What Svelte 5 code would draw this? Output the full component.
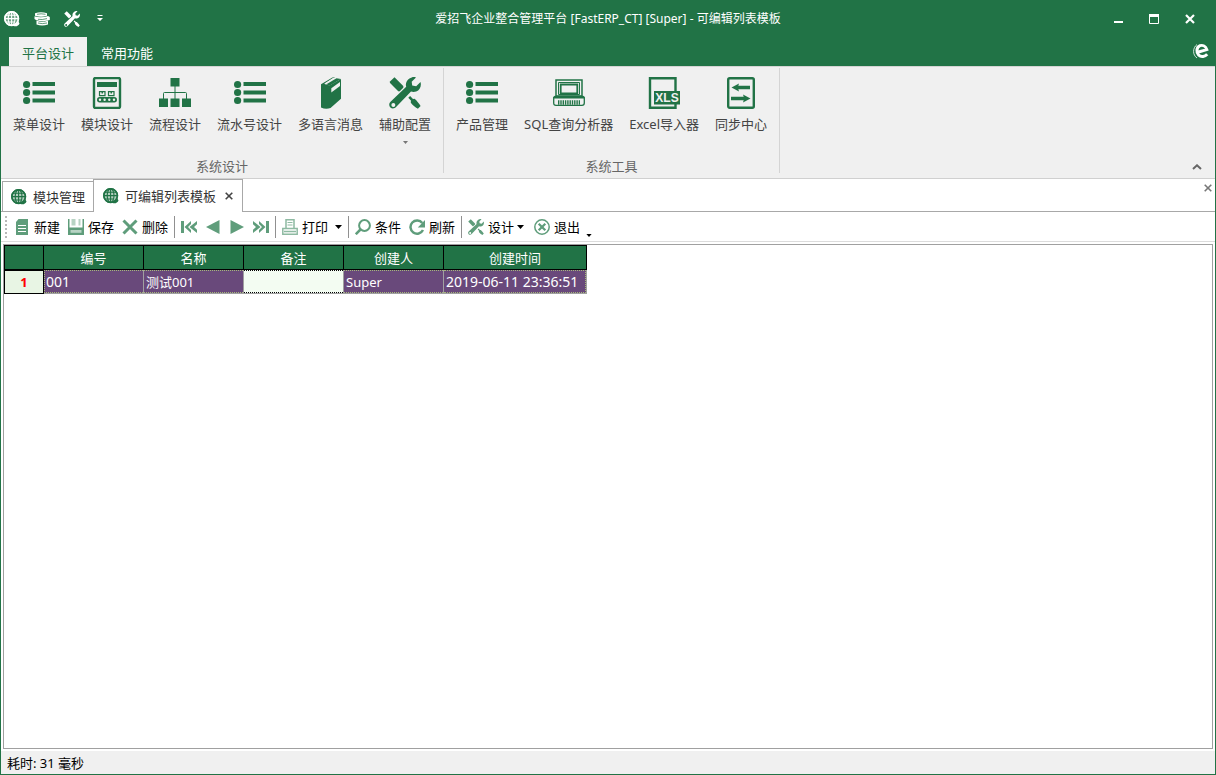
<script>
  const groups = [
    {
      title: '系统设计',
      items: [
        { icon: 'list', label: '菜单设计' },
        { icon: 'module', label: '模块设计' },
        { icon: 'flow', label: '流程设计' },
        { icon: 'list', label: '流水号设计' },
        { icon: 'book', label: '多语言消息' },
        { icon: 'tools', label: '辅助配置', menu: true },
      ],
    },
    {
      title: '系统工具',
      items: [
        { icon: 'list', label: '产品管理' },
        { icon: 'laptop', label: 'SQL查询分析器' },
        { icon: 'xls', label: 'Excel导入器' },
        { icon: 'sync', label: '同步中心' },
      ],
    },
  ];

  const toolbar = [
    [
      { icon: 'new', label: '新建' },
      { icon: 'save', label: '保存' },
      { icon: 'delete', label: '删除' },
    ],
    [
      { icon: 'first', hint: '首条' },
      { icon: 'prev', hint: '上一条' },
      { icon: 'next', hint: '下一条' },
      { icon: 'last', hint: '末条' },
    ],
    [{ icon: 'print', label: '打印', menu: 'wide' }],
    [
      { icon: 'search', label: '条件' },
      { icon: 'refresh', label: '刷新' },
    ],
    [
      { icon: 'tools', label: '设计', menu: 'tight' },
      { icon: 'exit', label: '退出' },
    ],
  ];

  const columns = ['编号', '名称', '备注', '创建人', '创建时间'];
  let remark = $state('');
</script>

{#snippet globe()}
  <svg class="s16" viewBox="0 0 16 16" fill="none" stroke="currentColor" aria-hidden="true">
    <circle cx="7.6" cy="7.6" r="7.2" fill="currentColor" fill-opacity=".35" stroke-width=".8" />
    <circle cx="7.6" cy="7.6" r="6.7" stroke-width="1.600" />
    <ellipse cx="7.6" cy="7.6" rx="3.4" ry="6.9" stroke-width="1.1" />
    <path d="M7.6 .8V14.4M.8 7.6H14.4M1.9 4.2H13.3M1.9 11H10" stroke-width="1.1" />
    <path d="M9.6 12.9c2 .8 4.300-.5 4.600-3l1.300 2.600c-.9 2.500-3.800 3.500-5.900 2.400z" fill="currentColor" stroke="none" />
  </svg>
{/snippet}

{#snippet tools(cls)}
  <svg class={cls} viewBox="0 0 32 32" fill="currentColor" aria-hidden="true">
    <path d="M1 4.500 5.500.3 14 8.800c.6.8.5 1.500 0 2.200L11 14c-.7.6-1.400.6-2 0L.8 5.700z" />
    <path d="M22.800.4c1.400-.5 2.800-.4 4.200.1L22.700 4.800l.5 3.700 4 .8L31.500 5c1.200 4.200-.6 8.300-4.300 9.600-2 .7-3.700.5-5.200 0L7.300 29.800c-1.700 2-4.300 2.200-5.900.6-1.700-1.700-1.500-4.200.4-5.800L17.200 9.800c-1.300-4 1.500-8.300 5.600-9.400zM4.300 26a2 2 0 1 0 .1 4 2 2 0 0 0-.1-4z" fill-rule="evenodd" />
    <path d="m19.300 20.800 1.800-1.800 2.900 2.900 1.600-.1c2.300 2 4.400 4.600 6 7.300l-2.700 2.700c-2.900-1.600-5.300-3.500-7.100-6l.1-2.200z" />
  </svg>
{/snippet}

{#snippet bigIcon(name)}
  {#if name === 'tools'}
    {@render tools('s32')}
  {:else}
    <svg class="s32" viewBox="0 0 32 32" fill="currentColor" aria-hidden="true">
      {#if name === 'list'}
        <circle cx="3.600" cy="7.500" r="3.600" /><circle cx="3.600" cy="15.500" r="3.600" /><circle cx="3.600" cy="23.500" r="3.600" />
        <path d="M9.500 5H32v4H9.500zM9.500 13.500H32v4H9.500zM9.500 21.500H32v4H9.500z" />
      {:else if name === 'module'}
        <rect x="3" y="1" width="26" height="30" rx="1.500" fill="none" stroke="currentColor" stroke-width="2.400" />
        <path d="M6 5h20v5H6z" />
        <path d="M8.500 14.700h5.500v4H8.500zM17.500 14.700h5.500v4h-5.500z" fill="none" stroke="currentColor" stroke-width="1.200" />
        <path d="M10.500 14.500h1.500v2h-1.500zM19.500 14.500h1.500v2h-1.500z" />
        <rect x="6" y="20" width="20" height="5.500" rx="2.700" />
        <g fill="#f0f0f0"><circle cx="9" cy="22.700" r="1.200" /><circle cx="13.600" cy="22.700" r="1.200" /><circle cx="18.300" cy="22.700" r="1.200" /><circle cx="23" cy="22.700" r="1.200" /></g>
      {:else if name === 'flow'}
        <path d="M11.500 1h9v8.500h-9zM0 21.500h9V30H0zM11.500 21.500h9V30h-9zM23 21.500h9V30h-9z" />
        <path d="M16 9v13M4.500 22v-5.500c0-.7.300-1 1-1h21c.7 0 1 .3 1 1V22" fill="none" stroke="currentColor" />
      {:else if name === 'book'}
        <path d="M6 7.300 17 .8c1-.6 2-.9 3.200-.8L9.500 6.800l5 1.800L26 2v19.700L15.500 31c-3 1.200-6.500 1-9.500-.5z" />
        <path d="m16.300 11.300 8.700-6.300v4l-8.700 6.600z" fill="#f0f0f0" />
        <path d="M9.800 6.900 19.500.8" fill="none" stroke="#f0f0f0" stroke-width="1.200" />
        <path d="M11.500 7.200 21.500 1.300l4.500.700-11.500 6.800z" />
      {:else if name === 'laptop'}
        <path d="M3 3h26v16H3z" fill="none" stroke="currentColor" stroke-width="1.500" />
        <path d="M5.500 5.500h21v12h-21z" fill="none" stroke="currentColor" stroke-width="1" />
        <path d="M7.700 7.500h16.600v9H7.700z" fill="none" stroke="currentColor" stroke-width="1.800" />
        <path d="M2 19.500h28l1.300.8v5.700c0 1.600-.7 2.300-2.300 2.300H3c-1.600 0-2.300-.7-2.300-2.300v-5.700z" fill="none" stroke="currentColor" stroke-width="1.300" />
        <path d="M1 20.500h30" stroke="currentColor" stroke-width="2" />
        <path d="M5 25.500h22" stroke="currentColor" stroke-width="4.500" stroke-dasharray="1.400 .9" />
      {:else if name === 'xls'}
        <path d="M2 1.300h25.500v29.500H2z" fill="none" stroke="currentColor" stroke-width="2.400" />
        <path d="M6 14h26v13.500H6z" />
        <text x="19" y="25" class="xls">XLS</text>
      {:else if name === 'sync'}
        <rect x="3.200" y="1.200" width="25.600" height="29.600" rx="1.500" fill="none" stroke="currentColor" stroke-width="2.400" />
        <path d="M6.500 10.500 14 6.500l-.7 2.200H25v3.600H13.300l.7 2.200zM25.500 21.500 18 17.500l.7 2.200H6v3.600h12.700l-.7 2.200z" />
      {/if}
    </svg>
  {/if}
{/snippet}

{#snippet smallIcon(name)}
  {#if name === 'tools'}
    {@render tools('s16')}
  {:else}
    <svg class="s16" viewBox="0 0 16 16" fill="currentColor" aria-hidden="true">
      {#if name === 'new'}
        <path d="M4.500 0H14v16H2V3z" />
        <path d="M4 6.500h8M4 9.500h8M4 12.500h8" stroke="#fff" stroke-width="1" />
      {:else if name === 'save'}
        <path d="M0 0h1.500v8.500h13V0H16v16H0z" />
        <path d="M3.500 0h4v6.500h-4zM10.500 0h2v6.500h-2z" opacity=".45" />
        <path d="M2.500 11h11v2.800h-11z" fill="#fff" opacity=".55" />
      {:else if name === 'delete'}
        <path d="M1.500 1.500 14.500 14.500M14.500 1.500 1.500 14.500" stroke="currentColor" stroke-width="3" />
      {:else if name === 'first'}
        <path d="M0 2h3v12H0zM10 2v3L7 8l3 3v3L3.500 8zM16 2v3.200L13 8l3 2.800V14L8.500 8z" />
      {:else if name === 'prev'}
        <path d="M14.500 1v14L1 8z" />
      {:else if name === 'next'}
        <path d="M1.500 1v14L15 8z" />
      {:else if name === 'last'}
        <path d="M13 2h3v12h-3zM6 2v3l3 3-3 3v3l6.500-6zM0 2v3.200L3 8l-3 2.800V14l7.500-6z" />
      {:else if name === 'print'}
        <g fill="none" stroke="currentColor" stroke-width="1.500" opacity=".7">
          <path d="M4 9V.8h8V9M.8 9.500h14.400v5.700H.8zM2 12.500h12" /><path d="M5.500 3.500h5M5.500 6h5" stroke-width="1" />
        </g>
      {:else if name === 'search'}
        <circle cx="9.500" cy="6.500" r="5.400" fill="none" stroke="currentColor" stroke-width="2" />
        <path d="m5.500 10.500-4.700 4.700" stroke="currentColor" stroke-width="2.500" />
      {:else if name === 'refresh'}
        <path d="M13.300 4A6.600 6.600 0 1 0 14 11" fill="none" stroke="currentColor" stroke-width="2.500" />
        <path d="M16 1v7.500H8.800z" />
      {:else if name === 'exit'}
        <circle cx="8" cy="8" r="7.200" fill="none" stroke="currentColor" stroke-width="1.500" />
        <path d="m4.700 4.700 6.600 6.600M11.300 4.700l-6.600 6.600" stroke="currentColor" stroke-width="2.200" />
      {/if}
    </svg>
  {/if}
{/snippet}

{#snippet caret()}
  <svg class="caret" viewBox="0 0 7 4" aria-hidden="true"><path d="M0 0h7L3.500 4z" fill="currentColor" /></svg>
{/snippet}

<div class="window">
  <header class="titlebar">
    <div class="quick">
      <button aria-label="主页">{@render globe()}</button>
      <button aria-label="数据">
        <svg class="s16" viewBox="0 0 16 16" fill="currentColor" aria-hidden="true">
          <path d="M1 2.300Q7 .2 13 2.300v2.500Q7 6.500 1 4.800z" />
          <path d="M.5 5.300Q7 7.500 14 5l1.800.9v3.200Q9 11.300 2 9L.5 8z" />
          <path d="M2.500 9.500Q8 12 14 9.500v3.900Q8 15.500 2.500 13.400z" />
          <path d="M3 3.300Q7 2.300 11.500 3.300M4 8.300q4 .8 9-.7M4 12q4 1.300 9 0" fill="none" stroke="#217346" stroke-width=".7" />
        </svg>
      </button>
      <button aria-label="工具">{@render tools('s16')}</button>
      <button aria-label="自定义快速访问工具栏">
        <svg class="more" viewBox="0 0 6 7" fill="currentColor" aria-hidden="true"><path d="M.5 0h5v1h-5zM0 3h6L3 6z" /></svg>
      </button>
    </div>
    <h1>爱招飞企业整合管理平台 [FastERP_CT] [Super] - 可编辑列表模板</h1>
    <div class="controls">
      <button aria-label="最小化"><svg viewBox="0 0 12 12"><path d="M2 8h9v2H2z" fill="currentColor" /></svg></button>
      <button aria-label="最大化"><svg viewBox="0 0 12 12"><path d="M1.500 2v8.500h9V2" fill="none" stroke="currentColor" /><path d="M1 1h10v3H1z" fill="currentColor" /></svg></button>
      <button aria-label="关闭"><svg viewBox="0 0 12 12"><path d="m2 2 8 8M10 2l-8 8" stroke="currentColor" stroke-width="2.200" /></svg></button>
    </div>
  </header>

  <nav class="ribbon-tabs">
    <button class="active">平台设计</button>
    <button>常用功能</button>
    <svg class="brand s16" viewBox="0 0 16 16" fill="none" stroke="currentColor" aria-hidden="true">
      <path d="M5.500 9 13.800 6.600C12.700 3.300 9.700 1.800 7 2.700 3.300 4.200 3 9.500 5.700 12.200c2.500 2.200 6.300 1.500 8.500-1" stroke-width="3" />
      <path d="M4 1.500C-.6 5-.5 12 4 15" stroke-width="1" opacity=".8" />
    </svg>
  </nav>

  <section class="ribbon">
    {#each groups as group}
      <div class="group">
        <div class="items">
          {#each group.items as item}
            <button>
              {@render bigIcon(item.icon)}
              <span>{item.label}</span>
              {#if item.menu}{@render caret()}{/if}
            </button>
          {/each}
        </div>
        <div class="group-title">{group.title}</div>
      </div>
    {/each}
    <button class="collapse" aria-label="折叠功能区">
      <svg viewBox="0 0 10 6" aria-hidden="true"><path d="m1 5 4-3.700L9 5" fill="none" stroke="currentColor" stroke-width="2" /></svg>
    </button>
  </section>

  <nav class="doc-tabs">
    <button class="doc">{@render globe()}<span>模块管理</span></button>
    <div class="doc current">
      {@render globe()}<span>可编辑列表模板</span>
      <button class="close" aria-label="关闭标签"><svg viewBox="0 0 8 8"><path d="m.7.700 6.600 6.600M7.300.700.7 7.300" stroke="currentColor" stroke-width="1.600" /></svg></button>
    </div>
    <button class="close close-all" aria-label="关闭页面"><svg viewBox="0 0 8 8"><path d="m.7.700 6.600 6.600M7.300.700.7 7.300" stroke="currentColor" stroke-width="1.600" /></svg></button>
  </nav>

  <div class="toolbar">
    <span class="grip"></span>
    {#each toolbar as part, i}
      {#if i > 0}<span class="sep"></span>{/if}
      {#each part as tool}
        <button class={tool.menu} aria-label={tool.label ?? tool.hint}>
          {@render smallIcon(tool.icon)}
          {#if tool.label}<span>{tool.label}</span>{/if}
          {#if tool.menu}{@render caret()}{/if}
        </button>
      {/each}
    {/each}
    <button class="overflow" aria-label="更多">{@render caret()}</button>
  </div>

  <main class="grid">
    <table>
      <colgroup>
        <col class="c-index" /><col class="c-text" /><col class="c-text" /><col class="c-text" /><col class="c-text" /><col class="c-time" />
      </colgroup>
      <thead>
        <tr><th aria-label="行号"></th>{#each columns as column}<th>{column}</th>{/each}</tr>
      </thead>
      <tbody>
        <tr>
          <th>1</th>
          <td><div class="cell start num">001</div></td>
          <td><div class="cell">测试001</div></td>
          <td class="editing"><input class="cell" aria-label="备注" bind:value={remark} /></td>
          <td><div class="cell">Super</div></td>
          <td><div class="cell end num">2019-06-11 23:36:51</div></td>
        </tr>
      </tbody>
    </table>
  </main>

  <footer>耗时: 31 毫秒</footer>
</div>

<style>
  :global(body) { margin: 0; }

  .window {
    --green: #217346;
    --soft: #5f9d7b;
    box-sizing: border-box;
    min-height: 100vh;
    display: flex;
    flex-direction: column;
    background: #fff;
    border: 1px solid var(--green);
    border-top: 0;
    color: #000;
    font: 13px/18px "Noto Sans", "Noto Sans CJK SC", sans-serif;
    white-space: nowrap;
  }

  button {
    margin: 0;
    padding: 0;
    border: 0;
    background: none;
    color: inherit;
    font: inherit;
  }
  svg { display: block; flex: none; }
  .s16 { width: 16px; height: 16px; }
  .s32 { width: 32px; height: 32px; }
  .caret { width: 7px; height: 4px; }

  .titlebar {
    display: grid;
    grid-template-columns: 1fr auto 1fr;
    align-items: center;
    height: 37px;
    background: var(--green);
    color: #fff;
  }
  .quick { display: flex; align-items: center; gap: 14px; padding-left: 3px; }
  .quick .more { width: 6px; height: 7px; margin-left: 3px; }
  h1 { margin: 0; font-size: 12px; font-weight: 400; line-height: 18px; }
  .controls { display: flex; justify-content: flex-end; gap: 24px; padding-right: 19px; }
  .controls svg { width: 12px; height: 12px; }

  .ribbon-tabs {
    display: flex;
    gap: 1px;
    height: 29px;
    padding: 0 6px 0 8px;
    background: var(--green);
    color: #fff;
  }
  .ribbon-tabs button { padding: 3px 13px 0; }
  .ribbon-tabs .active { background: #f1f1f1; color: var(--green); }
  .brand { margin: 6px 0 0 auto; }

  .ribbon {
    display: flex;
    height: 111px;
    background: #f0f0f0;
    border-top: 1px solid #d4d4d4;
    border-bottom: 1px solid #d0d0d0;
    color: #444;
  }
  .group {
    display: flex;
    flex-direction: column;
    justify-content: space-between;
    margin: 1px 0 5px;
    padding: 0 4px;
    border-right: 1px solid #d4d4d4;
  }
  .items { display: flex; align-items: flex-start; }
  .items button {
    display: flex;
    flex-direction: column;
    align-items: center;
    padding: 9px 8px 0;
  }
  .items .s32 { color: var(--green); }
  .items span { margin-top: 6px; }
  .items .caret { margin-top: 8px; width: 5px; height: 3px; color: #777; }
  .xls { font: bold 12px "Liberation Sans", sans-serif; fill: #f0f0f0; text-anchor: middle; }
  .group-title { text-align: center; color: #666; margin-bottom: -2px; }
  .collapse { align-self: flex-end; margin: 0 13px 8px auto; color: #666; }
  .collapse svg { width: 10px; height: 6px; }

  .doc-tabs {
    display: flex;
    align-items: flex-end;
    height: 32px;
    padding-left: 1px;
    border-bottom: 1px solid #a8a8a8;
    color: #333;
  }
  .doc {
    display: flex;
    align-items: center;
    gap: 6px;
    box-sizing: border-box;
    height: 30px;
    padding: 0 8px;
    border: 1px solid #a8a8a8;
    border-width: 1px 0 0 1px;
  }
  .doc .s16 { color: var(--green); }
  .current {
    height: 33px;
    margin-bottom: -1px;
    padding: 0 9px;
    border-right-width: 1px;
    background: #fff;
  }
  .close svg { width: 8px; height: 8px; }
  .current .close { margin-left: 3px; color: #444; }
  .close-all { align-self: flex-start; margin: 5px 3px 0 auto; color: #777; }

  .toolbar {
    display: flex;
    align-items: center;
    height: 29px;
    padding-left: 4px;
    border-bottom: 1px solid #dcdcdc;
  }
  .grip {
    width: 2px;
    height: 22px;
    margin-right: 3px;
    background: repeating-linear-gradient(#b8b8b8 0 2px, transparent 2px 4px);
  }
  .toolbar button { display: flex; align-items: center; gap: 4px; padding: 4px; }
  .toolbar .s16 { color: var(--soft); }
  .toolbar .wide .caret { margin-left: 3px; }
  .toolbar .tight .caret { margin-left: -1px; }
  .toolbar .tight { padding-right: 6px; }
  .sep { width: 1px; height: 22px; margin: 0 2px; background: #909090; }
  .toolbar .overflow { align-self: flex-end; padding: 4px 2px; }
  .overflow .caret { width: 6px; height: 3px; }

  .grid {
    flex: 1;
    margin: 2px 2px;
    border: 1px solid #a0a0a0;
  }
  table {
    table-layout: fixed;
    width: 583px;
    border-collapse: separate;
    border-spacing: 0;
  }
  .c-index { width: 40px; }
  .c-text { width: 100px; }
  .c-time { width: 143px; }
  th, td { box-sizing: border-box; padding: 0; }
  th { border: 1px solid #000; border-width: 0 1px 1px 0; font-weight: 400; }
  th:first-child { border-left-width: 1px; }
  thead th {
    height: 25px;
    border-top-width: 1px;
    background: var(--green);
    color: #fff;
  }
  tbody th {
    border-top-width: 1px;
    background: #e8f5e4;
    color: #f00;
    font-weight: 700;
  }
  td {
    height: 24px;
    border: 1px solid #a0a0a0;
    border-width: 0 1px 1px 0;
    background: #69497b;
    color: #fff;
  }
  .cell {
    box-sizing: border-box;
    height: 23px;
    padding: 2px;
    border: 1px dotted #a5b87a;
    border-width: 1px 0;
    line-height: 18px;
  }
  .start { padding-left: 1px; border-left-width: 1px; }
  .end { border-right-width: 1px; }
  .num { font-size: 14px; }
  input.cell {
    display: block;
    width: 100%;
    border-color: #000;
    border-radius: 0;
    outline: 0;
    background: #f3fcf2;
    font: inherit;
  }

  footer {
    height: 23px;
    padding: 0 6px;
    background: #f0f0f0;
    line-height: 24px;
  }
</style>
